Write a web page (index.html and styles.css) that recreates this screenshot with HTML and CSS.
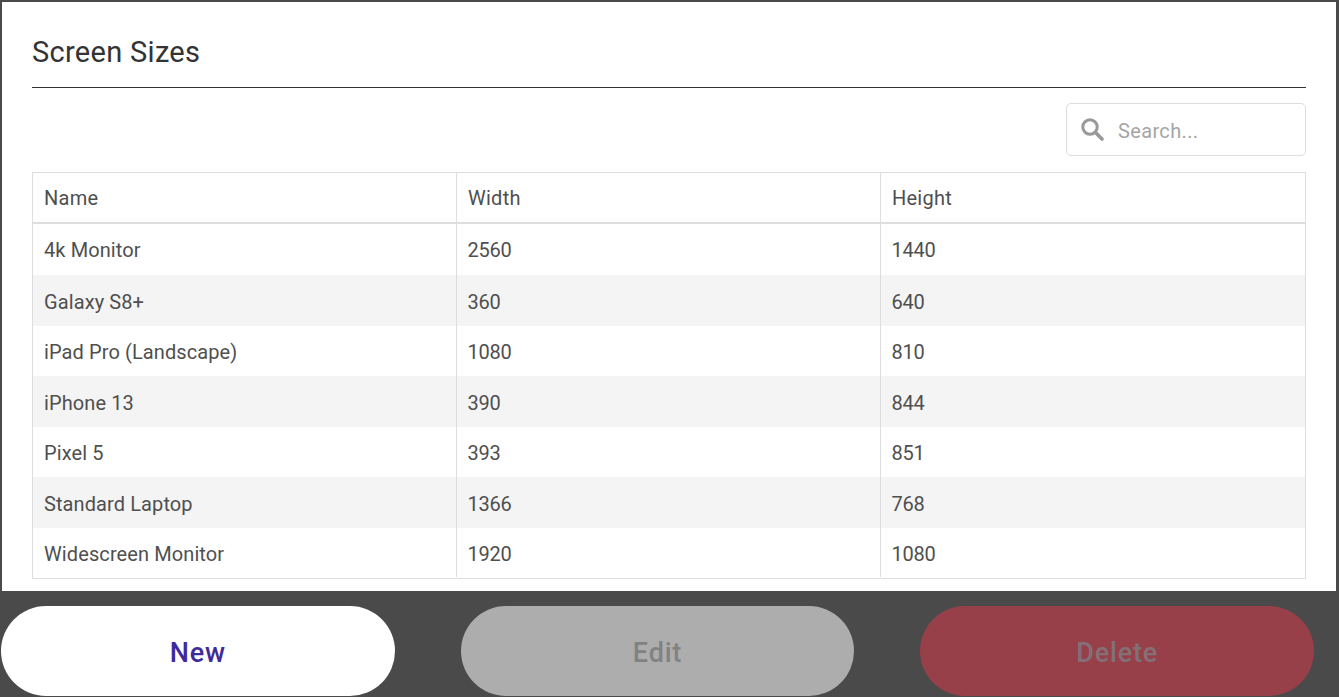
FILE: index.html
```html
<!DOCTYPE html>
<html lang="en">
<head>
<meta charset="utf-8">
<title>Screen Sizes</title>
<link rel="stylesheet" href="styles.css">
</head>
<body>
<main class="panel">
  <h1 class="title">Screen Sizes</h1>
  <div class="toolbar">
    <label class="search">
      <svg class="search-icon" viewBox="0 0 24 24" width="24" height="24" aria-hidden="true"><circle cx="10" cy="10" r="7.2" fill="none" stroke="#999" stroke-width="3"/><path d="M15.5 15.5L22 22" stroke="#999" stroke-width="3.6" stroke-linecap="round"/></svg>
      <span class="search-text">Search...</span>
    </label>
  </div>
  <div class="table">
    <div class="row head"><div class="cell">Name</div><div class="cell">Width</div><div class="cell">Height</div></div>
    <div class="row first"><div class="cell">4k Monitor</div><div class="cell num">2560</div><div class="cell num">1440</div></div>
    <div class="row alt"><div class="cell">Galaxy S8+</div><div class="cell num">360</div><div class="cell num">640</div></div>
    <div class="row"><div class="cell">iPad Pro (Landscape)</div><div class="cell num">1080</div><div class="cell num">810</div></div>
    <div class="row alt"><div class="cell">iPhone 13</div><div class="cell num">390</div><div class="cell num">844</div></div>
    <div class="row"><div class="cell">Pixel 5</div><div class="cell num">393</div><div class="cell num">851</div></div>
    <div class="row alt"><div class="cell">Standard Laptop</div><div class="cell num">1366</div><div class="cell num">768</div></div>
    <div class="row last"><div class="cell">Widescreen Monitor</div><div class="cell num">1920</div><div class="cell num">1080</div></div>
  </div>
</main>
<footer class="actions">
  <button class="btn btn-new">New</button>
  <button class="btn btn-edit">Edit</button>
  <button class="btn btn-delete">Delete</button>
</footer>
</body>
</html>
```
FILE: styles.css
```css
* { box-sizing: border-box; }
html, body { margin: 0; height: 100%; overflow: hidden; }
body {
  background: #4a4a4a;
  font-family: Roboto, "Liberation Sans", sans-serif;
  color: #4f4f4f;
  padding-top: 2px;
}
.panel {
  background: #fff;
  margin: 0 3px 0 2px;
  height: 589px;
  padding: 0 30px;
}
.title {
  margin: 0;
  height: 86px;
  border-bottom: 1px solid #333;
  padding-top: 33px;
  font-size: 29px;
  line-height: 34px;
  letter-spacing: 0.3px;
  font-weight: 400;
  color: #333;
}
.toolbar {
  display: flex;
  justify-content: flex-end;
  padding-top: 15px;
  height: 84px;
}
.search {
  display: flex;
  align-items: center;
  width: 240px;
  height: 53px;
  border: 1px solid #ddd;
  border-radius: 5px;
  padding-left: 13px;
}
.search-icon { display: block; flex: none; margin-right: 14px; margin-top: -2px; }
.search-text { font-size: 20px; letter-spacing: 0.35px; color: #a5a5a5; padding-top: 2px; }
.table {
  border: 1px solid #ddd;
  height: 407px;
}
.row {
  display: grid;
  grid-template-columns: 424px 424px 1fr;
  height: 50.5px;
  font-size: 20px;
  line-height: 24px;
  letter-spacing: 0.1px;
}
.row.head { height: 51px; border-bottom: 2px solid #ddd; letter-spacing: 0.25px; }
.row.first { height: 51px; }
.row.alt { background: #f4f4f4; }
.cell {
  display: flex;
  align-items: center;
  padding: 3px 0 0 11px;
  border-right: 1px solid #ddd;
}
.row.head .cell { padding-top: 0; }
.row.first .cell { padding-top: 1px; }
.row.alt .cell, .row.last .cell { padding-top: 4px; }
.cell.num { letter-spacing: -0.25px; padding-left: 10.5px; }
.cell:last-child { border-right: 0; }
.row.last .cell { margin-bottom: 1px; }
.actions {
  display: grid;
  grid-template-columns: repeat(3, 1fr);
  column-gap: 66px;
  margin: 15px 25px 0 1px;
}
.btn {
  height: 90px;
  border: 0;
  border-radius: 45px;
  font-family: inherit;
  font-size: 27px;
  font-weight: 500;
  letter-spacing: 0.8px;
  padding: 4px 0 0;
}
.btn-new { background: #fff; color: #3f2a9b; }
.btn-edit { background: #adadad; color: #828282; }
.btn-delete { background: #98404a; color: #837077; }
```
